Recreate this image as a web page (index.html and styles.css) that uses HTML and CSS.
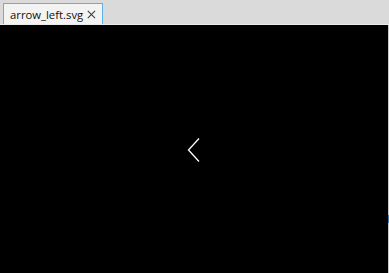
FILE: index.html
```html
<!DOCTYPE html>
<html>
<head>
<meta charset="utf-8">
<link rel="stylesheet" href="styles.css">
</head>
<body>
<div class="window">
  <div class="tabbar">
    <div class="tab">
      <span class="tab-title">arrow_left.svg</span>
      <svg class="tab-close" width="9" height="9" viewBox="0 0 9 9"><path d="M0.8 0.8L8.2 8.2M8.2 0.8L0.8 8.2" stroke="#444" stroke-width="1.2" fill="none"/></svg>
    </div>
  </div>
  <div class="main">
    <div class="canvas">
      <svg class="chevron" width="14" height="26" viewBox="0 0 14 26"><path d="M12 1.5L1.5 13L12 24.5" stroke="#fff" stroke-width="1.3" fill="none"/></svg>
    </div>
    <div class="edge"><div class="edge-mark"></div></div>
  </div>
</div>
</body>
</html>
```
FILE: styles.css
```css
* { box-sizing: border-box; }
html, body { margin: 0; padding: 0; }
body { width: 389px; height: 273px; overflow: hidden; font-family: "Open Sans", "Noto Sans", sans-serif; }
.window { display: flex; flex-direction: column; height: 273px; }
.tabbar { height: 25px; background: #dadada; padding: 3px 0 0 3px; display: flex; border-bottom: 1px solid #ececec; }
.tab { width: 100px; height: 21px; background: #f3f3f3; border: 1px solid #5fb0e6; border-bottom: none; display: flex; align-items: center; padding: 1px 6px 0 6px; gap: 4px; }
.tab-title { font-size: 11.3px; color: #111; line-height: 1; flex: 1; white-space: nowrap; }
.tab-close { display: block; }
.main { flex: 1; display: flex; }
.canvas { flex: 1; background: #000; display: flex; align-items: center; justify-content: center; padding-top: 2px; }
.chevron { display: block; }
.edge { width: 2px; background: #000; border-right: 1px solid #c8c8c8; position: relative; }
.edge-mark { position: absolute; top: 190px; left: 1px; width: 1px; height: 8px; background: #3a7fb5; }
```
